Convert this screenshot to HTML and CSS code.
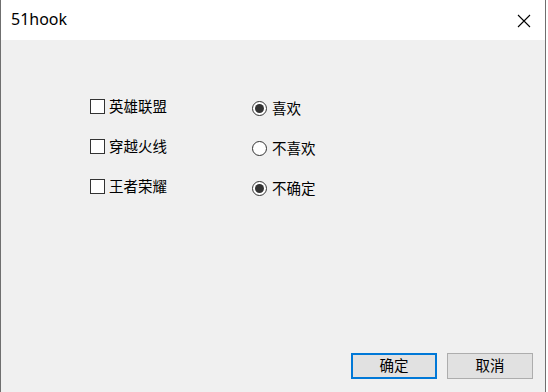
FILE: index.html
```html
<!DOCTYPE html>
<html lang="zh-CN">
<head>
<meta charset="utf-8">
<title>51hook</title>
<link rel="stylesheet" href="styles.css">
</head>
<body>
<div class="window">
  <div class="titlebar">
    <span class="title">51hook</span>
    <svg class="close" width="14" height="14" viewBox="0 0 14 14"><path d="M1 1 L13 13 M13 1 L1 13" stroke="#000" stroke-width="1.1" fill="none"/></svg>
  </div>
  <div class="client">
    <div class="options">
      <div class="col checks">
        <label class="item"><span class="box"></span><span class="label">英雄联盟</span></label>
        <label class="item"><span class="box"></span><span class="label">穿越火线</span></label>
        <label class="item"><span class="box"></span><span class="label">王者荣耀</span></label>
      </div>
      <div class="col radios">
        <label class="item"><span class="radio on"></span><span class="label">喜欢</span></label>
        <label class="item"><span class="radio"></span><span class="label">不喜欢</span></label>
        <label class="item"><span class="radio on"></span><span class="label">不确定</span></label>
      </div>
    </div>
    <div class="buttons">
      <button class="btn default">确定</button>
      <button class="btn">取消</button>
    </div>
  </div>
</div>
</body>
</html>
```

FILE: styles.css
```css
html, body {
  margin: 0;
  padding: 0;
  background: #ffffff;
}
body {
  width: 548px;
  height: 392px;
  overflow: hidden;
  font-family: "Noto Sans CJK SC", "Noto Sans", sans-serif;
}
.window {
  width: 544px;
  height: 392px;
  border-left: 1px solid #6f6f6f;
  border-right: 1px solid #6f6f6f;
  display: flex;
  flex-direction: column;
  box-sizing: content-box;
}
.titlebar {
  height: 40px;
  background: #ffffff;
  display: flex;
  align-items: center;
  justify-content: space-between;
  padding: 0 14px 0 10px;
}
.title {
  font-family: "Noto Sans", "Open Sans", sans-serif;
  font-size: 16px;
  color: #000;
  position: relative;
  top: -1px;
}
.close {
  display: block;
  position: relative;
  top: 1px;
}
.client {
  flex: 1;
  background: #f0f0f0;
  display: flex;
  flex-direction: column;
  justify-content: space-between;
}
.options {
  display: flex;
  padding-top: 56px;
  padding-left: 89px;
}
.col {
  display: flex;
  flex-direction: column;
}
.checks {
  width: 162px;
  gap: 20px;
}
.radios {
  padding-top: 2px;
  gap: 20px;
}
.item {
  display: flex;
  align-items: center;
  height: 20px;
  font-size: 14.5px;
  color: #000;
}
.box {
  width: 13px;
  height: 13px;
  border: 1px solid #333;
  background: #fff;
  margin-right: 4px;
}
.radio {
  width: 13px;
  height: 13px;
  border: 1px solid #333;
  border-radius: 50%;
  background: #fff;
  margin-right: 5px;
  display: flex;
  align-items: center;
  justify-content: center;
}
.radio.on::after {
  content: "";
  width: 9px;
  height: 9px;
  border-radius: 50%;
  background: #333;
}
.label {
  line-height: 20px;
}
.buttons {
  display: flex;
  justify-content: flex-end;
  gap: 10px;
  padding: 0 12px 13px 0;
}
.btn {
  width: 86px;
  height: 26px;
  background: #e1e1e1;
  border: 1px solid #adadad;
  font-family: "Noto Sans CJK SC", sans-serif;
  font-size: 14.5px;
  line-height: 20px;
  color: #000;
  padding: 0 0 3px 0;
  margin: 0;
}
.btn.default {
  border: 2px solid #0078d7;
}
```
